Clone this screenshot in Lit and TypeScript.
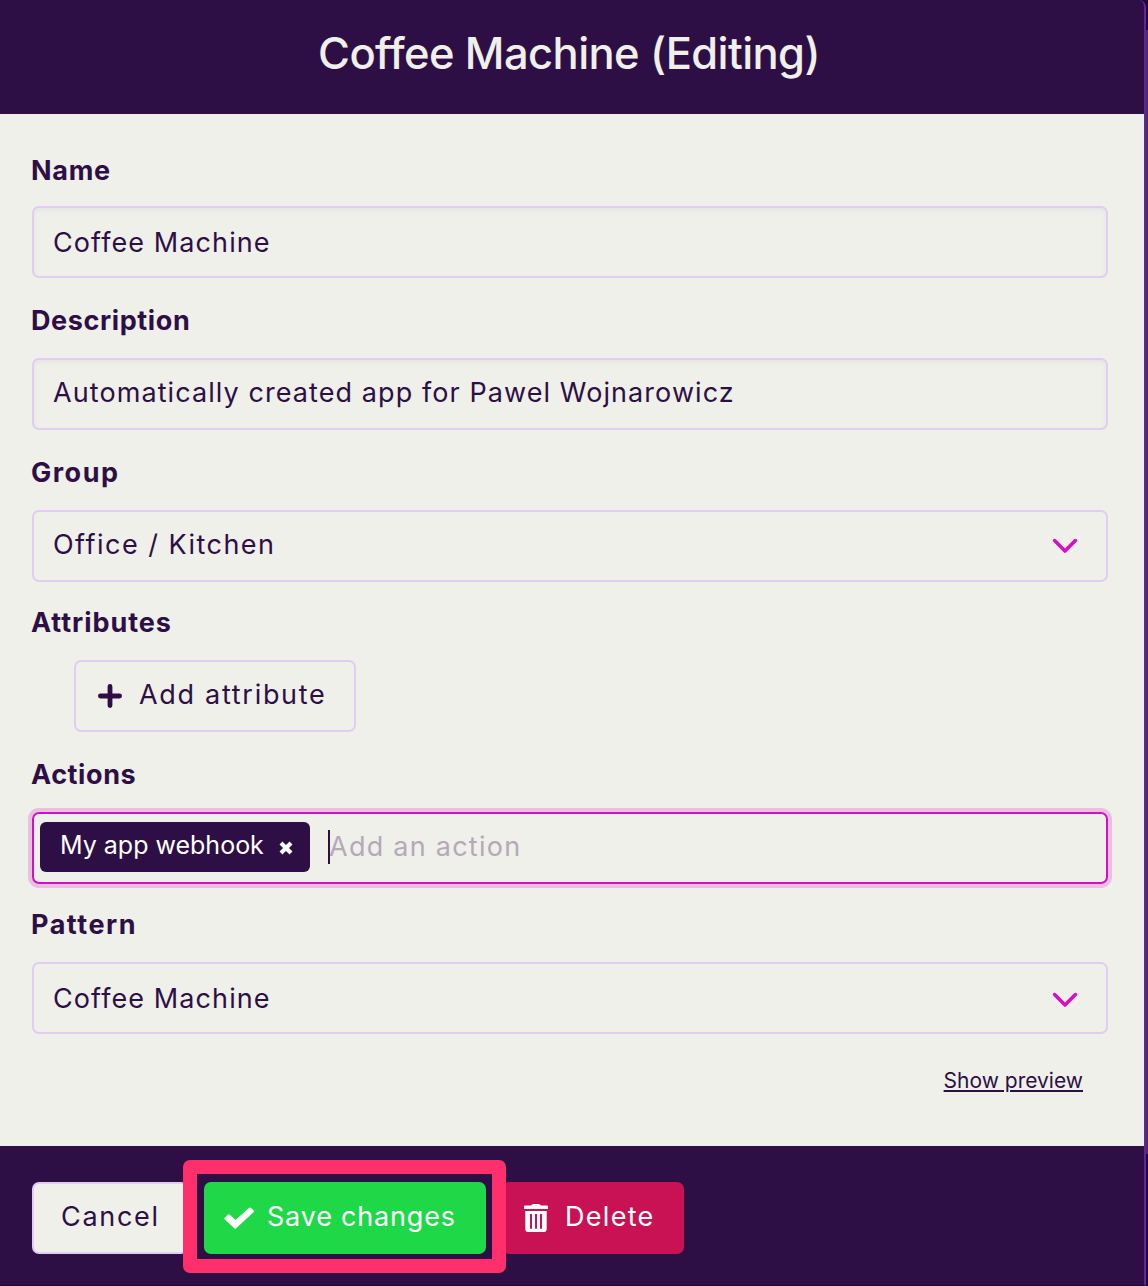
import { LitElement, html, css, svg, nothing } from "lit";
import { customElement } from "lit/decorators.js";

const chevron = html`<svg class="chevron" width="26" height="16" viewBox="0 0 26 16">
  ${svg`<path d="M2.6 2.6 L13 13 L23.4 2.6" fill="none" stroke="#d60fc4" stroke-width="3.6" stroke-linecap="round" stroke-linejoin="round"/>`}
</svg>`;
const plus = html`<svg width="24" height="24" viewBox="0 0 24 24">
  ${svg`<path d="M12 2.4 V21.6 M2.4 12 H21.6" fill="none" stroke="#2e0f45" stroke-width="4.8" stroke-linecap="round"/>`}
</svg>`;
const cross = html`<svg class="remove" width="14" height="14" viewBox="0 0 14 14">
  ${svg`<path d="M2 2 L12 12 M12 2 L2 12" fill="none" stroke="#fff" stroke-width="4.2"/>`}
</svg>`;
const check = html`<svg width="30" height="24" viewBox="0 0 30 24">
  ${svg`<path d="M0.5 12 L4 8.5 Q5 8 6 8.8 L11.5 13.9 L24.9 1.9 Q26 1.2 27 2 L29.5 4.3 Q30.3 5.3 29.5 6.3 L11.9 22.6 Q11.2 23.1 10.5 22.5 L0.6 13.2 Q0 12.6 0.5 12 Z" fill="#fff"/>`}
</svg>`;
const trash = html`<svg width="24" height="28" viewBox="0 0 24 28">
  ${svg`<path fill="#fff" fill-rule="evenodd" d="M1 1.5 H7 Q8 0 9.5 0 H14.5 Q16 0 17 1.5 H23 Q24 1.5 24 2.5 V5 H0 V2.5 Q0 1.5 1 1.5 Z M1.3 7 H22.7 V25.5 Q22.5 28 20 28 H4 Q1.5 28 1.3 25.5 Z M6 10 V24.7 H8 V10 Z M11 10 V24.7 H13 V10 Z M16 10 V24.7 H18 V10 Z"/>`}
</svg>`;

@customElement("app-root")
export class AppRoot extends LitElement {
  static styles = css`
    :host {
      display: block;
      font-family: Inter, "Liberation Sans", sans-serif;
      font-size: 27px;
      font-weight: 400;
      color: #2e0f45;
    }
    * { box-sizing: border-box; }
    svg { display: block; flex: none; }
    .window {
      display: flex;
      height: 1286px;
      overflow: hidden;
      background: linear-gradient(#1d0631 0 30px, #45305a 30px 1154px, #1d0631 1154px);
    }
    .panel {
      display: flex;
      flex-direction: column;
      width: 1146px;
      height: 1286px;
      border-right: 2px solid #6a1fa0;
      border-bottom: 1px solid #1d0631;
      border-top-right-radius: 7px;
      background: #2e0f45;
    }
    .header { height: 114px; text-align: center; flex: none; padding-right: 6px; }
    .title {
      margin: 0;
      font-size: 43.5px;
      font-weight: 550;
      letter-spacing: -0.6px;
      line-height: 107px;
      color: #eff0ea;
    }
    .form {
      display: flex;
      flex-direction: column;
      height: 1032px;
      flex: none;
      padding: 12px 36px 0 32px;
      background: #eff0ea;
    }
    .label {
      height: 80px;
      margin-left: -1px;
      line-height: 86px;
      font-weight: 650;
      white-space: nowrap;
    }
    .label.compact { height: 78px; line-height: 82px; }
    .label.top { line-height: 90px; }
    .control {
      display: flex;
      align-items: center;
      height: 72px;
      padding: 0 28px 0 19px;
      border: 2px solid #e1cdf2;
      border-radius: 7px;
      line-height: 68px;
      white-space: nowrap;
    }
    .value { flex: 1; height: 68px; line-height: 65px; }
    .value.low { line-height: 69px; }
    .value.low + .chevron { margin-top: 4px; }
    .text { box-shadow: inset 0 2px 5px rgba(46, 15, 69, 0.05); }
    .add { width: 282px; margin-left: 42px; padding: 0 22px; gap: 17px; }
    .add .value { flex: none; }
    .focused {
      border-color: #d60fc4;
      padding: 0 0 0 6px;
      box-shadow: 0 0 0 4px #ebbfe2;
    }
    .chip {
      display: flex;
      align-items: center;
      width: 270px;
      height: 50px;
      margin-top: -2px;
      padding-left: 20px;
      border-radius: 6px;
      background: #2e0f45;
      color: #fff;
      font-size: 25px;
      line-height: 46px;
    }
    .chip-text { width: 219px; height: 50px; }
    .remove { margin-top: 2px; }
    .entry { position: relative; height: 68px; margin-left: 19px; line-height: 65px; color: #b5a9b8; }
    .caret { position: absolute; left: -1px; top: 16px; width: 2px; height: 34px; background: #2e0f45; }
    .preview { display: flex; justify-content: flex-end; padding: 30px 25px 0 0; }
    .link {
      font-size: 21px;
      line-height: 34px;
      text-decoration: underline;
      text-decoration-thickness: 2px;
      text-underline-offset: 2px;
    }
    .footer { display: flex; gap: 16px; padding: 36px 32px 0; }
    .button {
      position: relative;
      display: flex;
      align-items: center;
      height: 72px;
      border-radius: 7px;
      color: #fff;
      white-space: nowrap;
    }
    .button-text { height: 72px; line-height: 69px; }
    .cancel { width: 156px; padding-left: 27px; border: 2px solid #e1cdf2; background: #eff0ea; color: #2e0f45; }
    .cancel .button-text { height: 68px; line-height: 65px; }
    .save { width: 282px; padding-left: 20px; gap: 13px; background: #1ed848; }
    .delete { width: 182px; padding-left: 22px; gap: 17px; background: #c91253; }
    .callout {
      position: absolute;
      left: -21px;
      top: -22px;
      width: 323px;
      height: 113px;
      border: 14px solid #ff2f6c;
      border-radius: 7px;
      z-index: 1;
    }
    .t-name { letter-spacing: 0.7px; }
    .t-description { letter-spacing: 0.6px; }
    .t-group { letter-spacing: 1.5px; }
    .t-attributes { letter-spacing: 0.95px; }
    .t-actions { letter-spacing: 0.6px; }
    .t-pattern { letter-spacing: 1.5px; }
    .t-machine { letter-spacing: 1.1px; }
    .t-summary { letter-spacing: 1.08px; }
    .t-office { letter-spacing: 1.47px; }
    .t-add { letter-spacing: 1.7px; }
    .t-chip { letter-spacing: 0; }
    .t-entry { letter-spacing: 1.25px; }
    .t-cancel { letter-spacing: 1.7px; }
    .t-save { letter-spacing: 0.8px; }
    .t-delete { letter-spacing: 1.3px; }
    .t-link { letter-spacing: 0; }
  `;

  private field(label: string, labelClass: string, value: string, valueClass: string, select = false) {
    return html`
      <div class="label ${labelClass}">${label}</div>
      <div class="control ${select ? "select" : "text"}">
        <span class="value ${valueClass}">${value}</span>
        ${select ? chevron : nothing}
      </div>`;
  }

  render() {
    return html`
      <div class="window">
        <section class="panel">
          <header class="header"><h1 class="title">Coffee Machine (Editing)</h1></header>
          <main class="form">
            ${this.field("Name", "top t-name", "Coffee Machine", "low t-machine")}
            ${this.field("Description", "t-description", "Automatically created app for Pawel Wojnarowicz", "t-summary")}
            ${this.field("Group", "t-group", "Office / Kitchen", "t-office", true)}
            <div class="label compact t-attributes">Attributes</div>
            <div class="control add">${plus}<span class="value t-add">Add attribute</span></div>
            <div class="label t-actions">Actions</div>
            <div class="control focused">
              <span class="chip"><span class="chip-text t-chip">My app webhook</span>${cross}</span>
              <span class="entry t-entry"><i class="caret"></i>Add an action</span>
            </div>
            ${this.field("Pattern", "compact t-pattern", "Coffee Machine", "low t-machine", true)}
            <div class="preview"><span class="link t-link">Show preview</span></div>
          </main>
          <footer class="footer">
            <div class="button cancel"><span class="button-text t-cancel">Cancel</span></div>
            <div class="button save">${check}<span class="button-text t-save">Save changes</span><i class="callout"></i></div>
            <div class="button delete">${trash}<span class="button-text t-delete">Delete</span></div>
          </footer>
        </section>
      </div>`;
  }
}
